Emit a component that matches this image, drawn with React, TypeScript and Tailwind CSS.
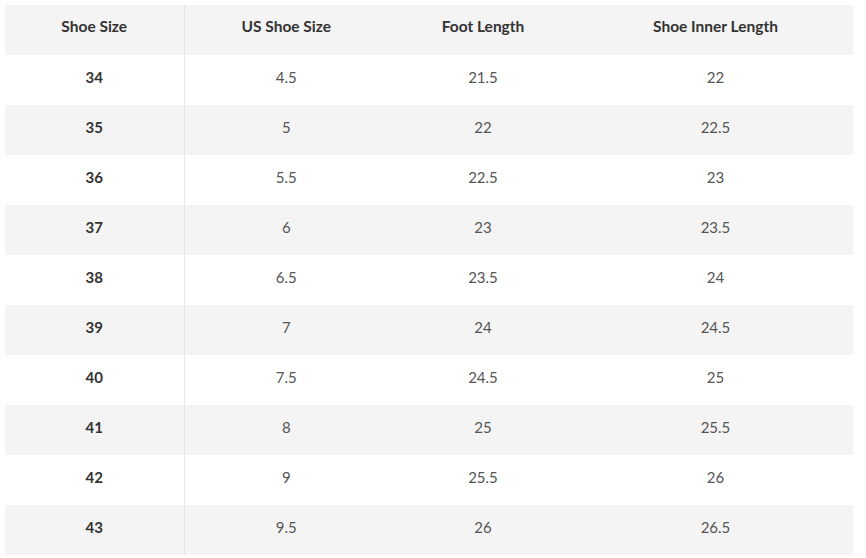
import React from 'react';

const ROWS = [
  ['34', '4.5', '21.5', '22'],
  ['35', '5', '22', '22.5'],
  ['36', '5.5', '22.5', '23'],
  ['37', '6', '23', '23.5'],
  ['38', '6.5', '23.5', '24'],
  ['39', '7', '24', '24.5'],
  ['40', '7.5', '24.5', '25'],
  ['41', '8', '25', '25.5'],
  ['42', '9', '25.5', '26'],
  ['43', '9.5', '26', '26.5'],
];

export default function App() {
  return (
    <div className="bg-white w-[866px] h-[558px] p-[5px]">
      <table
        className="w-[848px] border-collapse table-fixed"
        style={{ fontFamily: 'Lato, "Open Sans", sans-serif' }}
      >
        <colgroup>
          <col className="w-[179px]" />
          <col className="w-[204px]" />
          <col className="w-[190px]" />
          <col />
        </colgroup>
        <thead>
          <tr className="h-[50px] bg-[#f4f4f4] text-[15.5px] font-bold text-[#333]">
            <th className="border-r border-[#e6e6e6] pb-[6px]">Shoe Size</th>
            <th className="pb-[6px]">US Shoe Size</th>
            <th className="pb-[6px]">Foot Length</th>
            <th className="pb-[6px]">Shoe Inner Length</th>
          </tr>
        </thead>
        <tbody>
          {ROWS.map((r, i) => (
            <tr
              key={r[0]}
              className={`h-[50px] text-[15px] text-center ${i % 2 === 1 ? 'bg-[#f4f4f4]' : 'bg-white'}`}
            >
              <td className="border-r border-[#e6e6e6] font-bold text-[#333] pb-[6px]">{r[0]}</td>
              <td className="text-[#555] pb-[6px]">{r[1]}</td>
              <td className="text-[#555] pb-[6px]">{r[2]}</td>
              <td className="text-[#555] pb-[6px]">{r[3]}</td>
            </tr>
          ))}
        </tbody>
      </table>
    </div>
  );
}
